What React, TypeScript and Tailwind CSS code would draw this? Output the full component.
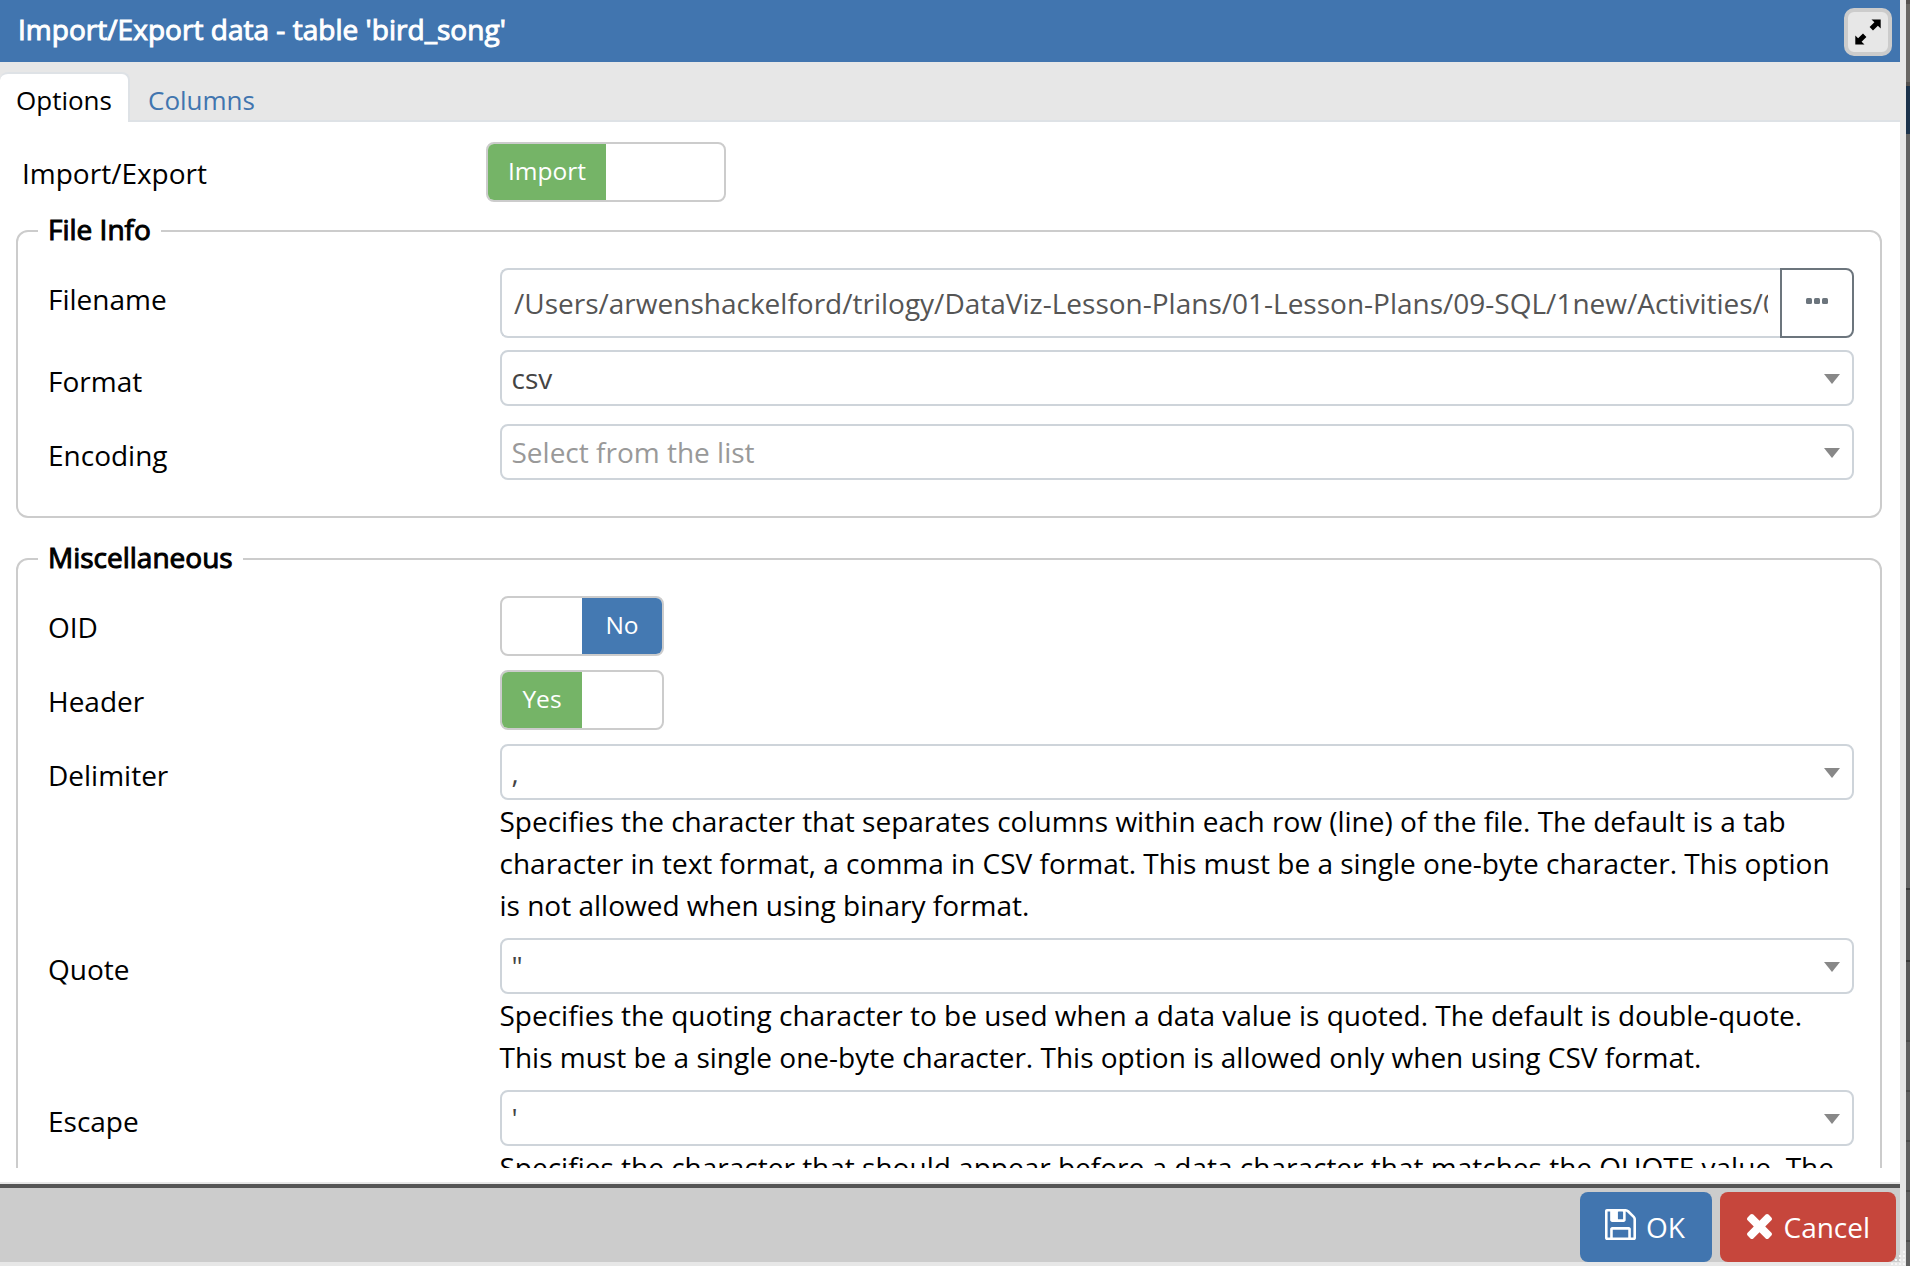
import React from "react";

const FONT = "font-['Open_Sans','Noto_Sans',sans-serif]";

function Switch({ on, off, value, width }: { on: string; off: string; value: boolean; width: string }) {
  return (
    <div className={`flex h-[60px] ${width} overflow-hidden rounded-[8px] border-2 border-[#cccccc] bg-white text-[24.5px] leading-[53px] text-white`}>
      <div className={`flex-1 text-center ${value ? "bg-[#75b467]" : ""}`}>{value ? on : ""}</div>
      <div className={`flex-1 text-center ${value ? "" : "bg-[#4479b2]"}`}>{value ? "" : off}</div>
    </div>
  );
}

function Select({ value, placeholder }: { value?: string; placeholder?: string }) {
  return (
    <div className="flex h-14 items-center justify-between rounded-[8px] border-2 border-[#ced4da] bg-white pl-[9.5px] pr-3">
      <span className={`leading-[42px] ${value ? "text-[#444444]" : "text-[#999999]"}`}>{value ?? placeholder}</span>
      <svg className="mt-[1px] h-[10px] w-4" viewBox="0 0 16 10">
        <path d="M0 0h16l-8 10z" fill="#888888" />
      </svg>
    </div>
  );
}

function Row({ label, height, children }: { label: string; height: string; children: React.ReactNode }) {
  return (
    <div className={`flex ${height}`}>
      <div className="w-[452px] shrink-0 pt-[10px] leading-[42px]">{label}</div>
      <div className="min-w-0 flex-1">{children}</div>
    </div>
  );
}

function Group({ title, className, children }: { title: string; className: string; children: React.ReactNode }) {
  return (
    <div className={`mx-4 w-[1866px] rounded-[12px] border-2 border-[#cccccc] pl-[30px] pr-[26px] ${className}`}>
      <div className="-ml-[10px] -mt-[24px] flex h-[43px]">
        <span className="bg-white pl-[10px] pr-[10px] leading-[42px] [-webkit-text-stroke:1px_#000]">{title}</span>
      </div>
      {children}
    </div>
  );
}

function Help({ lines }: { lines: string[] }) {
  return (
    <div className="-ml-[0.5px] whitespace-nowrap leading-[42px]">
      {lines.map((line) => (
        <div key={line}>{line}</div>
      ))}
    </div>
  );
}

export default function App() {
  return (
    <div className={`flex h-[1266px] w-[1910px] overflow-hidden bg-[#e7e7e7] text-[28px] text-black ${FONT}`}>
      <div className="flex w-[1900px] shrink-0 flex-col">
        <header className="flex h-[62px] shrink-0 items-start justify-between bg-[#4175af] pl-[18px] pr-2 pt-2">
          <h1 className="leading-[42px] tracking-[0.03px] text-white [-webkit-text-stroke:1px_#fff]">Import/Export data - table 'bird_song'</h1>
          <button className="flex size-12 items-center justify-center rounded-[10px] border-4 border-[#cccccc] bg-[#e7e7e7]">
            <svg className="size-[26px]" viewBox="0 0 26 26" fill="#000">
              <path d="M16.500 .5H25.700V9.500L22.900 6.700 18 11.400 14.600 8 19.400 3.300z" />
              <path d="M9.500 25.500H.3V16.500L3.100 19.300 8 14.600 11.400 18 6.600 22.700z" />
            </svg>
          </button>
        </header>
        <nav className="flex h-[60px] shrink-0 items-end border-b-2 border-[#dee2e6] text-[26px]">
          <div className="-mb-[2px] h-[50px] w-[130px] rounded-t-[8px] border-r-2 border-t-2 border-[#dee2e6] bg-white pl-4 leading-[52px]">Options</div>
          <div className="h-12 pl-[18px] leading-[56px] text-[#4175af]">Columns</div>
        </nav>
        <main className="h-[1046px] shrink-0 overflow-hidden bg-white pt-5">
          <div className="flex h-[88px]">
            <div className="w-[486px] pl-[22px] pt-[10px] leading-[42px]">Import/Export</div>
            <Switch on="Import" off="Export" value width="w-[240px]" />
          </div>
          <Group title="File Info" className="h-[288px]">
            <div className="pt-[17px]">
              <Row label="Filename" height="h-[82px]">
                <div className="flex h-[70px]">
                  <div className="min-w-0 flex-1 rounded-l-[8px] border-2 border-r-0 border-[#ced4da] pl-3 pr-3">
                    <div className="h-[66px] overflow-hidden whitespace-nowrap leading-[66px] text-[#555555]">
                      /Users/arwenshackelford/trilogy/DataViz-Lesson-Plans/01-Lesson-Plans/09-SQL/1new/Activities/01
                    </div>
                  </div>
                  <button className="flex w-[74px] justify-center rounded-r-[8px] border-2 border-[#6c757d] pt-7">
                    <svg className="h-[6px] w-[22px]" viewBox="0 0 22 6" fill="#6c757d">
                      <rect width="6" height="6" rx="1.500" />
                      <rect x="8" width="6" height="6" rx="1.500" />
                      <rect x="16" width="6" height="6" rx="1.500" />
                    </svg>
                  </button>
                </div>
              </Row>
              <Row label="Format" height="h-[74px]">
                <Select value="csv" />
              </Row>
              <Row label="Encoding" height="h-[74px]">
                <Select placeholder="Select from the list" />
              </Row>
            </div>
          </Group>
          <Group title="Miscellaneous" className="mt-10 h-[800px]">
            <div className="pt-[17px]">
              <Row label="OID" height="h-[74px]">
                <Switch on="Yes" off="No" value={false} width="w-[164px]" />
              </Row>
              <Row label="Header" height="h-[74px]">
                <Switch on="Yes" off="No" value width="w-[164px]" />
              </Row>
              <Row label="Delimiter" height="h-[194px]">
                <Select value="," />
                <Help
                  lines={[
                    "Specifies the character that separates columns within each row (line) of the file. The default is a tab",
                    "character in text format, a comma in CSV format. This must be a single one-byte character. This option",
                    "is not allowed when using binary format.",
                  ]}
                />
              </Row>
              <Row label="Quote" height="h-[152px]">
                <Select value={'"'} />
                <Help
                  lines={[
                    "Specifies the quoting character to be used when a data value is quoted. The default is double-quote.",
                    "This must be a single one-byte character. This option is allowed only when using CSV format.",
                  ]}
                />
              </Row>
              <Row label="Escape" height="h-[152px]">
                <Select value="'" />
                <Help lines={["Specifies the character that should appear before a data character that matches the QUOTE value. The"]} />
              </Row>
            </div>
          </Group>
        </main>
        <footer className="h-[94px] shrink-0 border-t-[14px] border-white bg-[#e7e7e7] pt-[2px]">
          <div className="flex h-[78px] justify-end gap-2 border-t-4 border-[#555555] bg-[#cccccc] pr-1 pt-1 text-white">
            <button className="flex h-[70px] w-[132px] rounded-[8px] bg-[#4175af] pl-[25px]">
              <svg className="mt-[17px] size-[31px]" viewBox="128 128 1536 1536" fill="currentColor">
                <path d="M512 1536h768v-384h-768v384zm896 0h128v-896q0-14-10-38.500t-20-34.500l-281-281q-10-10-34-20t-39-10v416q0 40-28 68t-68 28h-576q-40 0-68-28t-28-68v-416h-128v1280h128v-416q0-40 28-68t68-28h832q40 0 68 28t28 68v416zm-384-928v-320q0-13-9.500-22.500t-22.500-9.500h-192q-13 0-22.500 9.500t-9.500 22.500v320q0 13 9.500 22.500t22.500 9.500h192q13 0 22.500-9.500t9.500-22.500zm640 32v928q0 40-28 68t-68 28h-1344q-40 0-68-28t-28-68v-1344q0-40 28-68t68-28h928q40 0 88 20t76 48l280 280q28 28 48 76t20 88z" />
              </svg>
              <span className="pl-[10px] leading-[71px]">OK</span>
            </button>
            <button className="flex h-[70px] w-[176px] rounded-[8px] bg-[#c6463c] pl-[27px]">
              <svg className="mt-[22px] size-[25px]" viewBox="302 366 1188 1188" fill="currentColor">
                <path d="M1490 1322q0 40-28 68l-136 136q-28 28-68 28t-68-28l-294-294-294 294q-28 28-68 28t-68-28l-136-136q-28-28-28-68t28-68l294-294-294-294q-28-28-28-68t28-68l136-136q28-28 68-28t68 28l294 294 294-294q28-28 68-28t68 28l136 136q28 28 28 68t-28 68l-294 294 294 294q28 28 28 68z" />
              </svg>
              <span className="pl-[11.5px] leading-[71px]">Cancel</span>
            </button>
          </div>
        </footer>
      </div>
      <div className="ml-[6px] flex w-1 flex-col bg-[#626262]">
        <div className="h-[86px] border-b-4 border-t-4 border-[#555250] bg-[#696764]" />
        <div className="h-12 bg-[#1c334c]" />
        <div className="h-[756px] border-b-2 border-[#383838] bg-[#626262]" />
        <div className="h-[72px] border-b-2 border-[#383838] bg-[#585858]" />
        <div className="h-20 border-b-2 border-[#4c4c4c] bg-[#585858]" />
        <div className="h-[50px] border-b-2 border-[#4c4c4c] bg-[#606060]" />
        <div className="h-[50px] border-b-2 border-[#4c4c4c] bg-[#606060]" />
        <div className="h-[50px] border-b-2 border-[#4c4c4c] bg-[#606060]" />
        <div className="h-[50px] border-b-2 border-[#4c4c4c] bg-[#606060]" />
      </div>
      <svg className="absolute left-[1890px] top-[1250px] size-4" viewBox="0 0 16 16" fill="#f6f6f6">
        <path d="M13 1h2v2h-2zM9 5h2v2H9zM13 5h2v2h-2zM5 9h2v2H5zM9 9h2v2H9zM13 9h2v2h-2zM1 13h2v2H1zM5 13h2v2H5zM9 13h2v2H9zM13 13h2v2h-2z" />
      </svg>
    </div>
  );
}
